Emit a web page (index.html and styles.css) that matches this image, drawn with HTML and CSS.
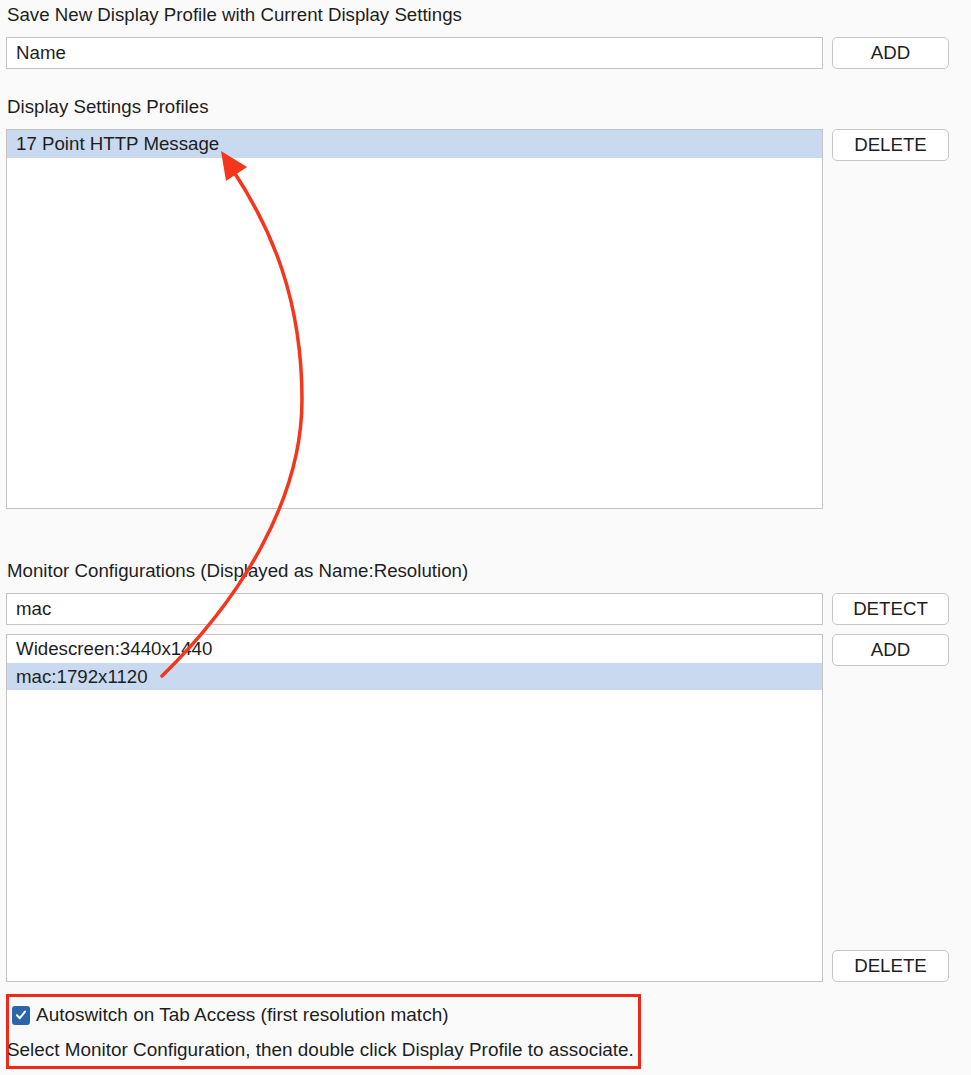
FILE: index.html
```html
<!DOCTYPE html>
<html>
<head>
<meta charset="utf-8">
<link rel="stylesheet" href="styles.css">
</head>
<body>
<div class="page">
  <div class="label first">Save New Display Profile with Current Display Settings</div>
  <div class="row">
    <div class="field">Name</div>
    <div class="side"><button class="btn">ADD</button></div>
  </div>

  <div class="label second">Display Settings Profiles</div>
  <div class="row">
    <div class="list profiles">
      <div class="item selected">17 Point HTTP Message</div>
    </div>
    <div class="side"><button class="btn">DELETE</button></div>
  </div>

  <div class="label third">Monitor Configurations (Displayed as Name:Resolution)</div>
  <div class="row">
    <div class="field">mac</div>
    <div class="side"><button class="btn">DETECT</button></div>
  </div>
  <div class="row gap-top">
    <div class="list monitors">
      <div class="item">Widescreen:3440x1440</div>
      <div class="item selected">mac:1792x1120</div>
    </div>
    <div class="side split">
      <button class="btn">ADD</button>
      <button class="btn">DELETE</button>
    </div>
  </div>

  <div class="note">
    <div class="check-line">
      <span class="checkbox"><svg width="12" height="12" viewBox="0 0 12 12"><path d="M2 6.3 L4.8 9.2 L10 2.6" fill="none" stroke="#fff" stroke-width="2" stroke-linecap="round" stroke-linejoin="round"/></svg></span>
      <span>Autoswitch on Tab Access (first resolution match)</span>
    </div>
    <div class="hint">Select Monitor Configuration, then double click Display Profile to associate.</div>
  </div>
</div>

<svg class="arrow" width="971" height="1075" viewBox="0 0 971 1075">
  <path d="M162 676 C 240 600, 302 500, 302 400 C 302 300, 272 230, 234 172" fill="none" stroke="#f5361c" stroke-width="3.5" stroke-linecap="round"/>
  <polygon points="221,151 247,167 226,181" fill="#f5361c"/>
</svg>
</body>
</html>
```

FILE: styles.css
```css
html, body {
  margin: 0;
  padding: 0;
  background: #fafafa;
}
body {
  font-family: "Liberation Sans", Arial, sans-serif;
  font-size: 18.7px;
  color: #1e1e1e;
  position: relative;
  width: 971px;
  height: 1075px;
  overflow: hidden;
}
.page {
  padding: 0 6px;
  display: flex;
  flex-direction: column;
}
.label {
  height: 20px;
  line-height: 20px;
  padding-left: 1px;
  margin-bottom: 12px;
}
.label.first { margin-top: 5px; }
.label.second { margin-top: 28px; }
.label.third { margin-top: 52px; }
.row {
  display: flex;
  gap: 9px;
}
.row.gap-top { margin-top: 9px; }
.field {
  width: 817px;
  box-sizing: border-box;
  height: 32px;
  line-height: 30px;
  border: 1px solid #c3c3c3;
  background: #fff;
  padding-left: 9px;
}
.side {
  width: 117px;
  display: flex;
  flex-direction: column;
}
.side.split { justify-content: space-between; }
.btn {
  width: 117px;
  height: 32px;
  box-sizing: border-box;
  border: 1px solid #c6c6c6;
  border-radius: 5px;
  background: #fff;
  font-family: "Liberation Sans", Arial, sans-serif;
  font-size: 18.7px;
  color: #1e1e1e;
  padding: 0;
}
.list {
  width: 817px;
  box-sizing: border-box;
  border: 1px solid #c3c3c3;
  background: #fff;
}
.list.profiles { height: 380px; }
.list.monitors { height: 348px; }
.item {
  height: 27.5px;
  line-height: 27px;
  padding-left: 9px;
}
.item.selected { background: #c9daf0; }
.note {
  align-self: flex-start;
  margin-top: 12px;
  border: 3px solid #f02818;
  width: 629px;
  height: 69px;
  padding: 0;
  font-size: 19px;
  white-space: nowrap;
}
.check-line {
  display: flex;
  align-items: center;
  gap: 6px;
  margin-top: 7px;
  margin-left: 3px;
  height: 22px;
}
.checkbox {
  width: 18px;
  height: 19px;
  border-radius: 3px;
  background: #2c65ab;
  display: flex;
  align-items: center;
  justify-content: center;
  flex: none;
}
.hint {
  margin-top: 14px;
  margin-left: -2px;
  line-height: 20px;
  font-size: 18.9px;
}
.arrow {
  position: absolute;
  left: 0;
  top: 0;
  pointer-events: none;
}
```
